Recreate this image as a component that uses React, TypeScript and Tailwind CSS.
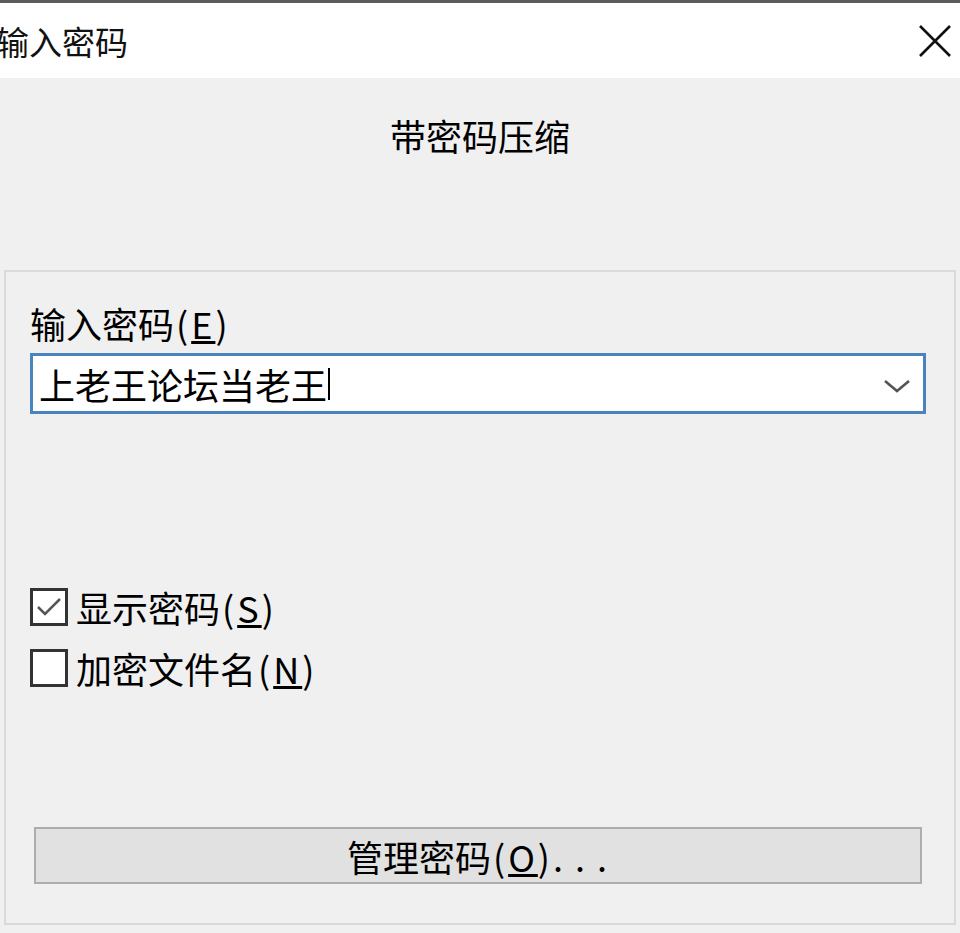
import React from "react";

const font = { fontFamily: '"Noto Sans CJK SC", "Noto Sans", sans-serif' };

function Check({ checked }: { checked: boolean }) {
  return (
    <div className="w-[38px] h-[38px] border-[3px] border-[#333333] bg-white flex items-center justify-center shrink-0">
      {checked && (
        <svg width="30" height="30" viewBox="0 0 30 30">
          <path d="M4 15 L11 22 L26 7" fill="none" stroke="#555555" strokeWidth="2.5" />
        </svg>
      )}
    </div>
  );
}

function Key({ k }: { k: string }) {
  return (
    <span className="tracking-[3px] ml-[2px]">
      (<span className="underline">{k}</span>)
    </span>
  );
}

export default function App() {
  return (
    <div className="w-[960px] h-[933px] bg-[#f0f0f0] overflow-hidden flex flex-col text-black" style={font}>
      <div className="h-[3px] bg-[#5c5c5c]" />
      <div className="h-[75px] bg-white flex items-center justify-between">
        <div className="ml-[-4px] text-[33px] leading-[36px] text-[#111]">输入密码</div>
        <svg width="34" height="34" viewBox="0 0 34 34" className="mr-[8px]">
          <path d="M2 2 L32 32 M32 2 L2 32" stroke="#111" strokeWidth="2.6" />
        </svg>
      </div>
      <div className="h-[192px] flex justify-center pt-[39px]">
        <div className="text-[36px] leading-[36px]">带密码压缩</div>
      </div>
      <div className="ml-[4px] w-[952px] h-[655px] border-2 border-[#dadada] flex flex-col pl-[24px]">
        <div className="mt-[33px] text-[36px] leading-[36px] whitespace-nowrap">
          输入密码<Key k="E" />
        </div>
        <div className="mt-[12px] w-[896px] h-[61px] border-[3px] border-[#4a84be] bg-white flex items-center justify-between pl-[6px] pr-[12px]">
          <div className="text-[36px] leading-[36px] flex items-center">
            上老王论坛当老王<span className="inline-block w-[2px] h-[32px] bg-black ml-[1px]" />
          </div>
          <svg width="28" height="16" viewBox="0 0 28 16" className="mt-[4px]">
            <path d="M2 3 L14 13 L26 3" fill="none" stroke="#555" strokeWidth="2.6" />
          </svg>
        </div>
        <div className="mt-[173px] flex items-center gap-[8px] h-[40px]">
          <Check checked />
          <div className="text-[36px] leading-[36px] whitespace-nowrap">
            显示密码<Key k="S" />
          </div>
        </div>
        <div className="mt-[21px] flex items-center gap-[8px] h-[40px]">
          <Check checked={false} />
          <div className="text-[36px] leading-[36px] whitespace-nowrap">
            加密文件名<Key k="N" />
          </div>
        </div>
        <div className="mt-[139px] ml-[4px] w-[888px] h-[57px] bg-[#e1e1e1] border-2 border-[#adadad] flex items-center justify-center">
          <div className="text-[36px] leading-[36px] whitespace-nowrap pl-[10px]">
            管理密码<Key k="O" />
            <span className="tracking-[12px]">...</span>
          </div>
        </div>
      </div>
    </div>
  );
}
